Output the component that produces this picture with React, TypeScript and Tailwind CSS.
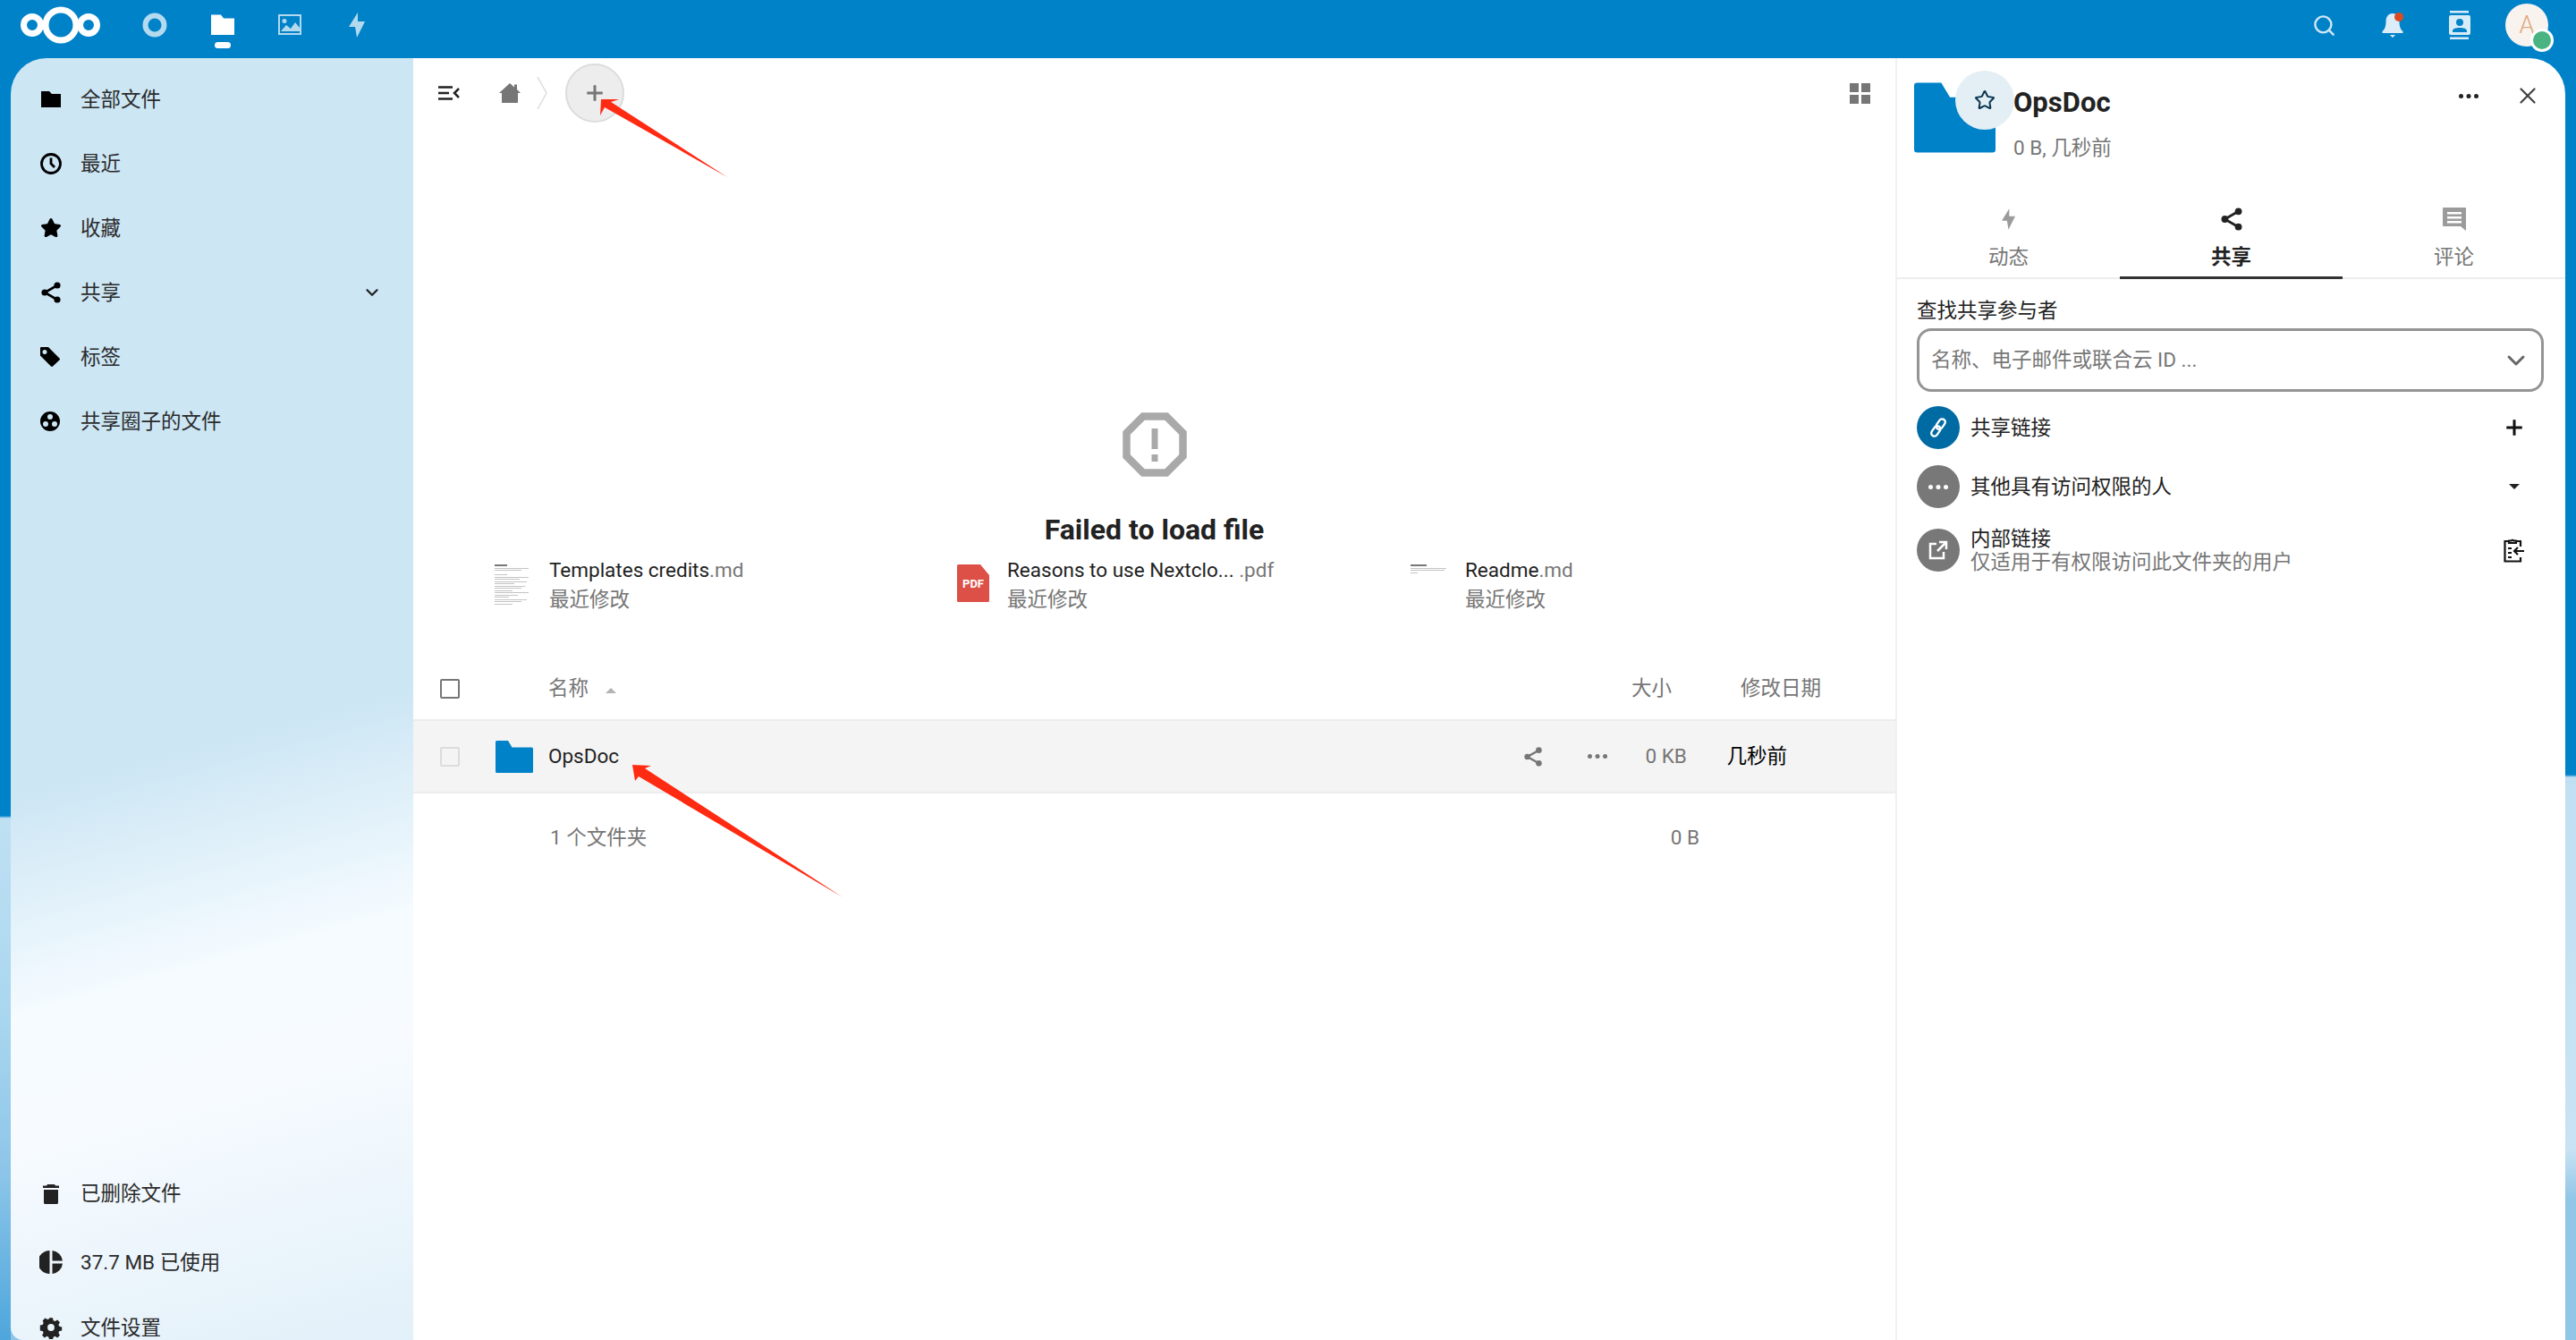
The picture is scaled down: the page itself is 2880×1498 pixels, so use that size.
import type { ReactNode } from "react";
import { ChevronDown, Plus, Search, Star, X } from "lucide-react";

const font = "font-['Roboto','Noto_Sans_CJK_SC',sans-serif]";

function Logo() {
  return (
    <svg width="92" height="42" viewBox="0 0 92 42" fill="none" stroke="#fff">
      <circle cx="46" cy="21" r="17" strokeWidth="7" />
      <circle cx="14" cy="21" r="9.5" strokeWidth="7" />
      <circle cx="77" cy="21" r="9.5" strokeWidth="7" />
    </svg>
  );
}

function FolderIcon({ className = "" }: { className?: string }) {
  return (
    <svg className={className} viewBox="0 0 42 36" fill="currentColor">
      <path d="M1.5 0H14l4.5 7.5h22a1.5 1.5 0 0 1 1.5 1.5v25.5a1.5 1.5 0 0 1-1.5 1.5h-39A1.5 1.5 0 0 1 0 34.5v-33A1.5 1.5 0 0 1 1.5 0z" />
    </svg>
  );
}

function ShareIcon({ size = 24, color = "#000" }: { size?: number; color?: string }) {
  return (
    <svg width={size} height={size} viewBox="0 0 24 24" fill={color} stroke={color}>
      <path d="M19 4 5 12l14 8" fill="none" strokeWidth="2.6" />
      <circle cx="19" cy="4" r="3.6" stroke="none" />
      <circle cx="5" cy="12" r="3.6" stroke="none" />
      <circle cx="19" cy="20" r="3.6" stroke="none" />
    </svg>
  );
}

function Bolt({ className = "", color }: { className?: string; color: string }) {
  return (
    <svg className={className} viewBox="0 0 18 28" fill={color}>
      <path d="M10 0 0 16h7l2 12 9-18h-8z" />
    </svg>
  );
}

function Dots({ color = "#222", size = 5 }: { color?: string; size?: number }) {
  return (
    <svg width={size * 4.4} height={size} viewBox="0 0 22 5" fill={color}>
      <circle cx="2.5" cy="2.5" r="2.5" />
      <circle cx="11" cy="2.5" r="2.5" />
      <circle cx="19.5" cy="2.5" r="2.5" />
    </svg>
  );
}

function TopBar() {
  return (
    <header className="flex h-[65px] shrink-0 items-center bg-[#0082c9] pr-[31px] pb-[9px] pl-[22px]">
      <Logo />
      <nav className="ml-[45px] flex items-center gap-[49px]">
        <svg width="28" height="28" viewBox="0 0 28 28" fill="none" stroke="#fff" strokeOpacity=".7" strokeWidth="6">
          <circle cx="14" cy="14" r="10.5" />
        </svg>
        <div className="relative h-[26px] w-[26px]">
          <svg className="h-[26px] w-[26px]" viewBox="0 0 26 23" fill="#fff">
            <path d="M0 0h11l3 4h12v18.5H0z" />
          </svg>
          <span className="absolute top-[32px] left-[4px] h-[7px] w-[18px] rounded-full bg-white" />
        </div>
        <svg className="opacity-70" width="26" height="24" viewBox="0 0 26 24" fill="#fff">
          <path fillRule="evenodd" d="M0 0h26v23H0zM2 2v19h22V2zM7 5a2.500 2.500 0 1 1 0 5 2.500 2.500 0 0 1 0-5zM3 19l6-7 5 4 5-7 5 6v4z" />
        </svg>
        <Bolt className="ml-[4px] h-[28px] w-[18px] opacity-70" color="#fff" />
      </nav>
      <div className="ml-auto flex items-center gap-[51px]">
        <Search size={27} strokeWidth={2.2} className="text-[#cfe7f5]" />
        <div className="relative">
          <svg width="24" height="28" viewBox="0 0 24 28" fill="#dcedf8">
            <path d="M12 1c5 0 7.500 4 7.500 9 0 6 1.500 9 4 11v2H.5v-2c2.500-2 4-5 4-11 0-5 2.500-9 7.500-9zM9 25h6l-3 3z" />
          </svg>
          <span className="absolute top-[0px] left-[14px] h-[10px] w-[10px] rounded-full bg-[#dc4b20]" />
        </div>
        <svg width="24" height="32" viewBox="0 0 24 32" fill="#d8ecf8">
          <path fillRule="evenodd" d="M1 0h21v2.500H1zM1 29.500h21V32H1zM2 5h20a2 2 0 0 1 2 2v18a2 2 0 0 1-2 2H2a2 2 0 0 1-2-2V7a2 2 0 0 1 2-2zm10 4a4 4 0 1 0 0 8 4 4 0 0 0 0-8zm-8 13.500V24h16v-1.500c0-2.500-4-3.500-8-3.500s-8 1-8 3.500z" />
        </svg>
        <div className="relative -ml-[12px] flex h-[48px] w-[48px] items-center justify-center rounded-full bg-[#f9f3ef] text-[27px] leading-none font-light text-[#dfa87c]">
          A
          <span className="absolute top-[28px] left-[28px] h-[26px] w-[26px] rounded-full border-[3px] border-white bg-[#49b382]" />
        </div>
      </div>
    </header>
  );
}

function NavRow({ icon, label, end, h = 72 }: { icon: ReactNode; label: string; end?: ReactNode; h?: number }) {
  return (
    <div className="flex items-center pr-[35px] pl-[33px]" style={{ height: h }}>
      <span className="flex w-[45px] justify-start">{icon}</span>
      <span className="text-[22.500px] leading-none text-[#2b2b2b]">{label}</span>
      {end && <span className="ml-auto">{end}</span>}
    </div>
  );
}

function Sidebar() {
  return (
    <aside className="flex w-[450px] shrink-0 flex-col rounded-tl-[40px] rounded-bl-[14px] bg-[linear-gradient(165deg,#cce6f4_0%,#cce6f4_53%,#f5fbff_69%,#f7fbff_78%,#e2f0f9_100%)]">
      <div className="pt-[10px]">
        <NavRow
          label="全部文件"
          icon={
            <svg width="22" height="18" viewBox="0 0 22 18" className="ml-[1px]">
              <path d="M0 0h9l3 3h10v15H0z" />
            </svg>
          }
        />
        <NavRow
          label="最近"
          icon={
            <svg width="24" height="24" viewBox="0 0 24 24" fill="none" stroke="#000" strokeWidth="2.800">
              <circle cx="12" cy="12" r="10.500" />
              <path d="M12 5.500V12l4 4" />
            </svg>
          }
        />
        <NavRow label="收藏" icon={<Star size={24} fill="#000" stroke="#000" />} />
        <NavRow
          label="共享"
          icon={<ShareIcon size={24} />}
          end={<ChevronDown size={22} strokeWidth={2.500} className="text-[#222]" />}
        />
        <NavRow
          label="标签"
          icon={
            <svg width="22" height="22" viewBox="0 0 22 22">
              <path fillRule="evenodd" d="M1 0h8l12.500 12.500a1.500 1.500 0 0 1 0 2L14 21.500a1.500 1.500 0 0 1-2 0L0 9.500V1a1 1 0 0 1 1-1zm4 3a2.500 2.500 0 1 0 0 5 2.500 2.500 0 0 0 0-5z" />
            </svg>
          }
        />
        <NavRow
          label="共享圈子的文件"
          icon={
            <svg width="22" height="22" viewBox="0 0 22 22">
              <path fillRule="evenodd" d="M11 0a11 11 0 1 1 0 22 11 11 0 0 1 0-22zm0 3a3 3 0 1 0 0 6 3 3 0 0 0 0-6zM6 11a3 3 0 1 0 0 6 3 3 0 0 0 0-6zm10 0a3 3 0 1 0 0 6 3 3 0 0 0 0-6z" />
            </svg>
          }
        />
      </div>
      <div className="mt-auto -mb-[21px]">
        <NavRow
          h={77}
          label="已删除文件"
          icon={
            <svg width="18" height="22" viewBox="0 0 18 22" fill="#222" className="ml-[3px]">
              <path d="M5 0h8l1 1.500h4V4H0V1.500h4zM1 6h16v14.500a1.500 1.500 0 0 1-1.500 1.500h-13A1.500 1.500 0 0 1 1 20.500z" />
            </svg>
          }
        />
        <NavRow
          h={76}
          label="37.7 MB 已使用"
          icon={
            <svg width="26" height="26" viewBox="0 0 26 26" fill="#222" className="-ml-[1px]">
              <path d="M11.500 0v26a13 13 0 0 1 0-26zM14.500 0A13 13 0 0 1 26 11.500H14.500zM14.500 14.500H26A13 13 0 0 1 14.500 26z" />
            </svg>
          }
        />
        <NavRow
          h={70}
          label="文件设置"
          icon={
            <svg width="26" height="26" viewBox="0 0 24 24" fill="#222" className="-ml-[1px]">
              <path fillRule="evenodd" d="M10 1h4l.7 3 2 .9 2.700-1.600 2.800 2.800-1.600 2.700.9 2 3 .7v4l-3 .7-.9 2 1.600 2.700-2.800 2.800-2.700-1.600-2 .9-.7 3h-4l-.7-3-2-.9-2.700 1.600-2.800-2.800 1.600-2.700-.9-2-3-.7V9.500l3-.7.9-2L2.500 4l2.800-2.800L8 2.800l2-.9zm2 7a4 4 0 1 0 0 8 4 4 0 0 0 0-8z" transform="translate(1.200 1.200) scale(.9)" />
            </svg>
          }
        />
      </div>
    </aside>
  );
}

function Thumb({ lines, bold }: { lines: number[]; bold: number }) {
  return (
    <div className="flex w-[40px] flex-col gap-[1.500px]">
      <div className="h-[2px] bg-[#777]" style={{ width: bold }} />
      {lines.map((w, i) => (
        <div key={i} className="h-[1px] bg-[#c4c4c4]" style={{ width: w }} />
      ))}
    </div>
  );
}

function RecentFile({ left, leftW = 61, name, ext, w }: { left: ReactNode; leftW?: number; name: string; ext: string; w: number }) {
  return (
    <div className="flex h-[52px] items-start" style={{ width: w }}>
      <div className="flex shrink-0 items-start pt-[8px]" style={{ width: leftW }}>{left}</div>
      <div className="-mt-[2px] text-[22.500px] leading-[33px]">
        <div className="whitespace-nowrap text-[#222]">
          {name}
          <span className="text-[#767676]">{ext}</span>
        </div>
        <div className="text-[#767676]">最近修改</div>
      </div>
    </div>
  );
}

function Main() {
  return (
    <main className="relative flex w-[1657px] shrink-0 flex-col bg-white">
      <div className="flex h-[78px] items-center pr-[28px] pl-[28px]">
        <svg width="24" height="16" viewBox="0 0 24 16" fill="none" stroke="#222" strokeWidth="2.500">
          <path d="M0 1.500h16M0 8h12M0 14.500h16M23 3l-5 5 5 5" />
        </svg>
        <svg className="ml-[44px]" width="24" height="22" viewBox="0 0 24 22" fill="#767676">
          <path d="M12 0l5 4.500V1.500h3v5.500l4 4h-3v11H3V11H0z" />
        </svg>
        <svg className="ml-[18px]" width="12" height="36" viewBox="0 0 12 36" fill="none" stroke="#dcdcdc" strokeWidth="1.500">
          <path d="M1 0l10 18L1 36" />
        </svg>
        <button className="ml-[20px] flex h-[66px] w-[66px] items-center justify-center rounded-full border-2 border-[#dcdcdc] bg-[#ededed]">
          <Plus size={30} strokeWidth={2.400} strokeLinecap="butt" className="text-[#767676]" />
        </button>
        <svg className="ml-auto" width="23" height="23" viewBox="0 0 23 23" fill="#767676">
          <rect width="10" height="10" />
          <rect x="13" width="10" height="10" />
          <rect y="13" width="10" height="10" />
          <rect x="13" y="13" width="10" height="10" />
        </svg>
      </div>

      <div className="flex flex-col items-center pt-[318px]">
        <svg width="72" height="72" viewBox="0 0 72 72" fill="none" stroke="#a9a9a9" strokeWidth="8.500">
          <path d="M23 4.500h26L67.500 23v26L49 67.500H23L4.500 49V23z" />
          <path d="M36 18v23M36 47v8" strokeWidth="7" />
        </svg>
        <h2 className="mt-[39px] text-[32px] leading-[40px] font-bold text-[#222]">Failed to load file</h2>
      </div>

      <div className="mt-[11px] flex pl-[91px]">
        <RecentFile
          w={517}
          name="Templates credits"
          ext=".md"
          left={<Thumb bold={14} lines={[38, 30, 0, 14, 38, 28, 36, 22, 34, 30, 20, 38, 26, 16, 36, 30, 20]} />}
        />
        <RecentFile
          w={507}
          leftW={56}
          name="Reasons to use Nextclo..."
          ext=" .pdf"
          left={
            <svg width="36" height="42" viewBox="0 0 36 42">
              <path d="M1.500 0H26l10 12v28.500a1.500 1.500 0 0 1-1.500 1.500h-33A1.500 1.500 0 0 1 0 40.500v-39A1.500 1.500 0 0 1 1.500 0z" fill="#dd5048" />
              <text x="18" y="26" textAnchor="middle" fill="#fff" fontSize="13" fontWeight="700">PDF</text>
            </svg>
          }
        />
        <RecentFile w={400} name="Readme" ext=".md" left={<Thumb bold={18} lines={[40, 38, 8]} />} />
      </div>

      <div className="mt-[61px] flex h-[68px] items-center pr-[83px] text-[22.500px] text-[#767676]">
        <span className="ml-[30px] h-[22px] w-[22px] rounded-[2px] border-2 border-[#767676]" />
        <span className="ml-[99px]">名称</span>
        <span className="mt-[3px] ml-[19px] h-0 w-0 border-x-[6px] border-b-[6px] border-x-transparent border-b-[#b3b3b3]" />
        <span className="ml-auto">大小</span>
        <span className="ml-[77px]">修改日期</span>
      </div>

      <div className="flex h-[83px] items-center border-y-2 border-[#ededed] bg-[#f4f4f4] pr-[121px] text-[22.500px]">
        <span className="ml-[30px] h-[22px] w-[22px] rounded-[2px] border-2 border-[#dcdcdc]" />
        <FolderIcon className="ml-[40px] h-[36px] w-[42px] text-[#0082c9]" />
        <span className="ml-[17px] text-[#222]">OpsDoc</span>
        <span className="ml-auto"><ShareIcon size={22} color="#767676" /></span>
        <span className="ml-[50px]"><Dots color="#767676" /></span>
        <span className="ml-[42px] w-[44px] whitespace-nowrap text-[#767676]">0 KB</span>
        <span className="ml-[47px] text-black">几秒前</span>
      </div>

      <div className="flex h-[100px] items-center pr-[219px] text-[22.500px] text-[#767676]">
        <span className="ml-[153px]">1 个文件夹</span>
        <span className="ml-auto">0 B</span>
      </div>

      <svg className="pointer-events-none absolute top-[-65px] left-[-462px]" width="2880" height="1498" fill="#ff2a12">
        <path d="M672 111l20 0-9 3 130 84-137-78-5 9z" />
        <path d="M707 855l21 1-7 3 221 144-228-135-4 5z" />
      </svg>
    </main>
  );
}

function Tab({ label, active, icon }: { label: string; active?: boolean; icon: ReactNode }) {
  return (
    <div className={`flex h-[79px] w-[249px] flex-col items-center border-b-[3px] ${active ? "border-[#333]" : "border-transparent"}`}>
      <div className="-mt-[3px] flex h-[30px] items-center">{icon}</div>
      <span className={`mt-[13px] text-[22.500px] leading-[28px] ${active ? "font-bold text-[#222]" : "text-[#767676]"}`}>{label}</span>
    </div>
  );
}

function ShareRow({ color, icon, title, sub, end, h }: { color: string; icon: ReactNode; title: string; sub?: string; end: ReactNode; h: number }) {
  return (
    <div className="flex items-center pr-[45px] pl-[22px]" style={{ height: h }}>
      <span className="flex h-[48px] w-[48px] items-center justify-center rounded-full" style={{ backgroundColor: color }}>{icon}</span>
      <div className="ml-[12px] text-[22.500px] leading-[26px] text-[#222]">
        <div>{title}</div>
        {sub && <div className="text-[#767676]">{sub}</div>}
      </div>
      <span className="ml-auto flex w-[24px] justify-center">{end}</span>
    </div>
  );
}

function Details() {
  return (
    <aside className="flex w-[749px] shrink-0 flex-col rounded-tr-[40px] border-l-2 border-[#f0f0f0] bg-white">
      <div className="relative h-[168px] shrink-0">
        <FolderIcon className="absolute top-[27px] left-[19px] h-[79px] w-[91px] text-[#0082c9]" />
        <span className="absolute top-[14px] left-[65px] flex h-[66px] w-[66px] items-center justify-center rounded-full bg-[#e3eff5]">
          <Star size={24} strokeWidth={2} className="text-[#0b3550]" />
        </span>
        <div className="absolute top-[27px] left-[130px] text-[31px] leading-[46px] font-bold text-[#222]">OpsDoc</div>
        <div className="absolute top-[84px] left-[130px] text-[22.500px] leading-[32px] text-[#767676]">0 B, 几秒前</div>
        <span className="absolute top-[40px] left-[628px]"><Dots /></span>
        <X size={30} strokeWidth={1.800} className="absolute top-[27px] left-[690px] text-[#444]" />
      </div>
      <div className="-mb-[1px] flex h-[79px] shrink-0 items-start border-b-2 border-[#ededed]">
        <Tab label="动态" icon={<Bolt className="h-[26px] w-[15px]" color="#9b9b9b" />} />
        <Tab label="共享" active icon={<ShareIcon size={26} color="#222" />} />
        <Tab
          label="评论"
          icon={
            <svg width="26" height="26" viewBox="0 0 26 26" fill="#9b9b9b">
              <path fillRule="evenodd" d="M1 0h24a1 1 0 0 1 1 1v25l-6-5H1a1 1 0 0 1-1-1V1a1 1 0 0 1 1-1zm4 5v2.500h16V5zm0 5v2.500h16V10zm0 5v2.500h16V15z" />
            </svg>
          }
        />
      </div>
      <div className="pt-[20px] pl-[22px] text-[22.500px] leading-[32px] text-[#222]">查找共享参与者</div>
      <div className="mt-[4px] ml-[22px] flex h-[71px] w-[701px] items-center rounded-[16px] border-[3px] border-[#949494] pr-[12px] pl-[13px] text-[22.500px] text-[#767676]">
        名称、电子邮件或联合云 ID ...
        <ChevronDown size={32} strokeWidth={2.200} className="ml-auto text-[#666]" />
      </div>
      <div className="h-[5px] shrink-0" />
      <ShareRow
        h={70}
        color="#006aa3"
        title="共享链接"
        icon={
          <svg width="24" height="24" viewBox="0 0 24 24" fill="none" stroke="#fff" strokeWidth="2.400">
            <g transform="rotate(35 12 12)">
              <rect x="8.500" y="1" width="7" height="12.500" rx="3.500" />
              <rect x="8.500" y="10.500" width="7" height="12.500" rx="3.500" />
            </g>
          </svg>
        }
        end={<Plus size={30} strokeWidth={2.400} strokeLinecap="butt" className="shrink-0 text-[#111]" />}
      />
      <ShareRow
        h={62}
        color="#787878"
        title="其他具有访问权限的人"
        icon={<Dots color="#fff" />}
        end={<span className="h-0 w-0 border-x-[6px] border-t-[6px] border-x-transparent border-t-[#222]" />}
      />
      <ShareRow
        h={80}
        color="#787878"
        title="内部链接"
        sub="仅适用于有权限访问此文件夹的用户"
        icon={
          <svg width="22" height="22" viewBox="0 0 22 22" fill="none" stroke="#fff" strokeWidth="2.500">
            <path d="M9 4H2v16h15v-7M12 2h8v8M19.500 2.500 10 12" />
          </svg>
        }
        end={
          <svg width="24" height="28" viewBox="0 0 24 28" fill="none" stroke="#111" strokeWidth="2.200">
            <path d="M6 4H1.500v22.500H19V22M14 4h5v6M6 6V3.500h2.500a2 2 0 0 1 3 0H14V6zM5 12h4M5 17h4M5 22h4M23 15H12m4-4-4 4 4 4" />
          </svg>
        }
      />
    </aside>
  );
}

export default function App() {
  return (
    <div className={`flex h-[1498px] w-[2880px] flex-col overflow-hidden bg-[linear-gradient(180deg,#0082c9_0%,#0082c9_60%,#8cc5e8_60.200%,#8cc5e8_100%)] ${font}`}>
      <TopBar />
      <div className="flex min-h-0 flex-1">
        <div className="w-[12px] shrink-0 bg-[linear-gradient(180deg,#0082c9_59.100%,#bfe0f3_59.300%,#a9d6ef_75%,#8cc5e8_87%,#4ea6dc_100%)]" />
        <Sidebar />
        <Main />
        <Details />
        <div className="w-[12px] shrink-0 bg-[linear-gradient(180deg,#0082c9_55.900%,#c0dff2_56.100%,#c9e3f4_85%,#90c6e7_89%,#90c6e7_100%)]" />
      </div>
    </div>
  );
}
